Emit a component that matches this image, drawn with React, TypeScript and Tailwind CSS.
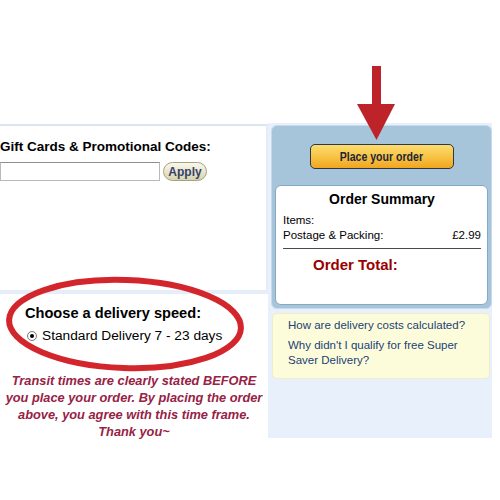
const RedArrow = () => (
  <svg className="absolute left-[350px] top-[60px]" width="52" height="84" viewBox="350 60 52 84">
    <rect x="372" y="66" width="9" height="41" fill="#bd2328" />
    <polygon points="357,104 395,104 376.5,140" fill="#bd2328" />
  </svg>
);

const RedEllipse = () => (
  <svg className="absolute left-0 top-[268px]" width="260" height="115" viewBox="0 268 260 115">
    <ellipse
      cx="125"
      cy="324"
      rx="116"
      ry="44"
      fill="none"
      stroke="#d3262c"
      strokeWidth="6"
      transform="rotate(2 125 324)"
    />
  </svg>
);

const GiftCards = () => (
  <div className="h-[164px] pt-[13px] border-r-2 border-[#e4ecf6]">
    <div className="text-[13.5px] leading-[16px] font-bold text-black whitespace-nowrap">
      Gift Cards &amp; Promotional Codes:
    </div>
    <div className="mt-[7px] flex items-center gap-[3px]">
      <div className="w-[160px] h-[19px] border border-[#b9b9b9] border-t-[#8e8e8e] bg-white" />
      <button className="w-[44px] h-[19px] rounded-full border border-[#a6a37c] bg-gradient-to-b from-[#faf8ec] to-[#d8d3ae] text-[12px] leading-none font-bold text-[#36406a]">
        Apply
      </button>
    </div>
  </div>
);

const DeliverySpeed = () => (
  <div className="pt-[10px]">
    <div className="pl-[25px]">
      <div className="text-[14.6px] leading-[18px] font-bold text-black">Choose a delivery speed:</div>
      <div className="mt-[5px] ml-[2px] flex items-center gap-[5px] h-[18px]">
        <span className="w-[10px] h-[10px] rounded-full border border-[#777] flex items-center justify-center bg-white">
          <span className="w-[4px] h-[4px] rounded-full bg-black" />
        </span>
        <span className="text-[13.7px] leading-[18px] text-black whitespace-nowrap">
          Standard Delivery 7 - 23 days
        </span>
      </div>
    </div>
    <p className="mt-[27px] w-[268px] text-center text-[12.8px] leading-[17px] font-bold italic text-[#962245] whitespace-nowrap">
      Transit times are clearly stated BEFORE
      <br />
      you place your order. By placing the order
      <br />
      above, you agree with this time frame.
      <br />
      Thank you~
    </p>
  </div>
);

const OrderBox = () => (
  <div className="rounded-[6px] bg-[#a6c5db] border border-[#c9dbe9] flex flex-col items-center pt-[18px] px-[3px] pb-[3px]">
    <button className="w-[144px] h-[25px] rounded-[5px] border-[1.5px] border-[#2c3748] bg-gradient-to-b from-[#fcdc6e] via-[#f8c445] to-[#f1a51c] flex items-center justify-center">
      <span className="inline-block scale-x-[0.88] text-[12px] leading-none font-bold text-[#1c2638] whitespace-nowrap">
        Place your order
      </span>
    </button>
    <div className="mt-[16px] w-full h-[120px] rounded-[6px] bg-white border border-[#86a8c2] pl-[7px] pr-[6px] pt-[5px]">
      <div className="text-center text-[14px] leading-[17px] font-bold text-black">Order Summary</div>
      <div className="mt-[5px] text-[11.5px] leading-[15px] text-black">
        <div>Items:</div>
        <div className="flex justify-between">
          <span>Postage &amp; Packing:</span>
          <span>£2.99</span>
        </div>
      </div>
      <div className="mt-[5px] h-px bg-[#4a4a4a]" />
      <div className="mt-[7px] pl-[30px] text-[15px] leading-[18px] font-bold text-[#990000]">Order Total:</div>
    </div>
  </div>
);

const HelpLinks = () => (
  <div className="mt-[4px] ml-px w-[218px] h-[66px] rounded-[5px] bg-[#fdfcda] border border-[#efeec6] pl-[15px] pt-[4px] text-[11.5px] leading-[15px] text-[#213f78]">
    <div className="whitespace-nowrap">How are delivery costs calculated?</div>
    <div className="mt-[5px]">
      Why didn't I qualify for free Super
      <br />
      Saver Delivery?
    </div>
  </div>
);

export default function App() {
  return (
    <div className="relative w-[500px] h-[500px] overflow-hidden bg-white font-['Liberation_Sans',Arial,sans-serif]">
      <div className="h-[123px]" />
      <div className="flex items-start">
        <div className="w-[268px] mt-px border-t-2 border-[#dce6f2]">
          <GiftCards />
          <div className="h-[4px] bg-[#e4edf8]" />
          <DeliverySpeed />
        </div>
        <div className="w-[224px] h-[315px] bg-[#e8f0fb] pl-[3px] pt-[2px]">
          <OrderBox />
          <HelpLinks />
        </div>
      </div>
      <RedArrow />
      <RedEllipse />
    </div>
  );
}
